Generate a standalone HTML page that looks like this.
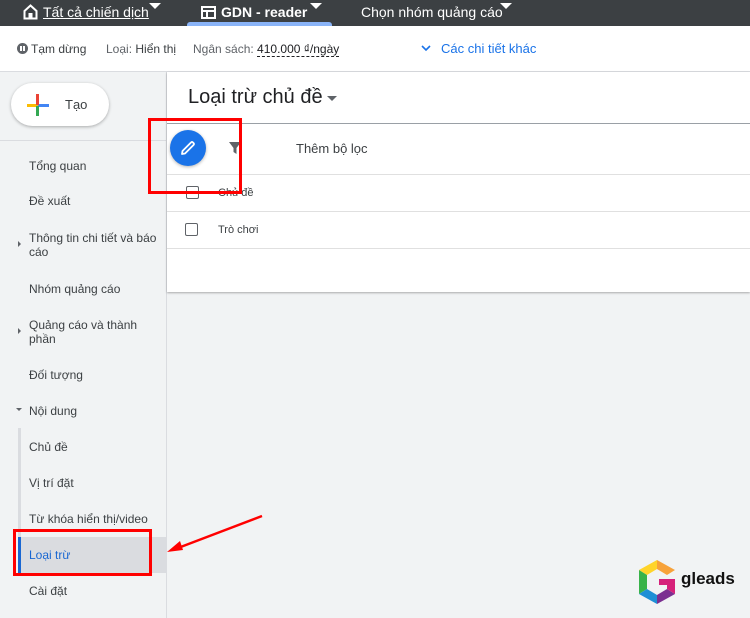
<!DOCTYPE html>
<html><head><meta charset="utf-8"><style>
*{margin:0;padding:0;box-sizing:border-box}
body{width:750px;height:618px;overflow:hidden;background:#f1f3f4;font-family:"Liberation Sans",Arial,sans-serif;position:relative;color:#3c4043}
.a{position:absolute;white-space:nowrap}
.top{left:0;top:0;width:750px;height:26px;background:#3c4043}
.tw{color:#fff;font-size:14px;top:4px}
.tri{width:0;height:0;border-left:6px solid transparent;border-right:6px solid transparent;border-top:6px solid #fff}
.sub{left:0;top:26px;width:750px;height:46px;background:#fff;border-bottom:1px solid #dadce0}
.s{font-size:12px;top:42px;color:#3c4043}
.nav{font-size:12px;color:#3c4043;left:29px;line-height:14px}
.card{left:167px;top:72px;width:583px;height:220px;background:#fff;box-shadow:0 1px 2px rgba(0,0,0,.3)}
.hl{left:167px;width:583px;height:1px;background:#e0e0e0}
.cb{width:13px;height:13px;border:1.5px solid #5f6368;border-radius:2px}
</style></head><body>
<div class="a top"></div>
<svg class="a" style="left:23px;top:4px" width="15" height="16" viewBox="0 0 15 16"><path d="M1.5 7 L7.5 1.5 L13.5 7 V14.5 H1.5 Z" fill="none" stroke="#fff" stroke-width="2"/><rect x="5.5" y="9" width="4" height="6" fill="#fff"/></svg>
<div class="a tw" style="left:43px;text-decoration:underline">Tất cả chiến dịch</div>
<div class="a tri" style="left:149px;top:3px"></div>
<div class="a" style="left:187px;top:22px;width:145px;height:4px;background:#8ab4f8;border-radius:3px 3px 0 0"></div>
<svg class="a" style="left:201px;top:6px" width="15" height="13"><rect x="1" y="1" width="13" height="11" fill="none" stroke="#fff" stroke-width="2"/><rect x="1" y="4" width="13" height="2" fill="#fff"/><rect x="5" y="6" width="2" height="6" fill="#fff"/></svg>
<div class="a tw" style="left:221px;font-weight:bold">GDN - reader</div>
<div class="a tri" style="left:310px;top:3px"></div>
<div class="a tw" style="left:361px">Chọn nhóm quảng cáo</div>
<div class="a tri" style="left:500px;top:3px"></div>
<div class="a sub"></div>
<div class="a" style="left:17px;top:43px;width:11px;height:11px;border-radius:50%;background:#5f6368"></div>
<div class="a" style="left:20px;top:46px;width:2px;height:5px;background:#fff"></div>
<div class="a" style="left:23px;top:46px;width:2px;height:5px;background:#fff"></div>
<div class="a s" style="left:31px">Tạm dừng</div>
<div class="a s" style="left:106px;color:#5f6368">Loại: <span style="color:#3c4043">Hiển thị</span></div>
<div class="a s" style="left:193px;color:#5f6368">Ngân sách: <span style="color:#202124;border-bottom:1px dashed #202124">410.000 ₫/ngày</span></div>
<svg class="a" style="left:421px;top:44px" width="10" height="8"><path d="M1 2 L5 6 L9 2" fill="none" stroke="#1a73e8" stroke-width="1.6"/></svg>
<div class="a" style="left:441px;top:41px;font-size:13px;color:#1a73e8">Các chi tiết khác</div>
<div class="a" style="left:166px;top:72px;width:1px;height:546px;background:#dadce0"></div>
<div class="a" style="left:0;top:140px;width:166px;height:1px;background:#dadce0"></div>
<div class="a" style="left:11px;top:83px;width:98px;height:43px;border-radius:22px;background:#fff;box-shadow:0 1px 3px rgba(0,0,0,.3)"></div>
<div class="a" style="left:27px;top:104px;width:11px;height:3px;background:#fbbc04"></div>
<div class="a" style="left:38px;top:104px;width:11px;height:3px;background:#4285f4"></div>
<div class="a" style="left:36px;top:94px;width:3px;height:11px;background:#ea4335"></div>
<div class="a" style="left:36px;top:106px;width:3px;height:10px;background:#34a853"></div>
<div class="a" style="left:65px;top:97px;font-size:13px;color:#3c4043">Tạo</div>
<div class="a nav" style="top:159px">Tổng quan</div>
<div class="a nav" style="top:194px">Đề xuất</div>
<div class="a" style="left:18px;top:241px;border-top:3px solid transparent;border-bottom:3px solid transparent;border-left:3px solid #5f6368"></div>
<div class="a nav" style="top:231px">Thông tin chi tiết và báo<br>cáo</div>
<div class="a nav" style="top:282px">Nhóm quảng cáo</div>
<div class="a" style="left:18px;top:328px;border-top:3px solid transparent;border-bottom:3px solid transparent;border-left:3px solid #5f6368"></div>
<div class="a nav" style="top:318px">Quảng cáo và thành<br>phần</div>
<div class="a nav" style="top:368px">Đối tượng</div>
<div class="a" style="left:16px;top:408px;border-left:3px solid transparent;border-right:3px solid transparent;border-top:3px solid #5f6368"></div>
<div class="a nav" style="top:404px">Nội dung</div>
<div class="a" style="left:18px;top:428px;width:3px;height:109px;background:#dadce0"></div>
<div class="a nav" style="top:440px">Chủ đề</div>
<div class="a nav" style="top:476px">Vị trí đặt</div>
<div class="a nav" style="top:512px">Từ khóa hiển thị/video</div>
<div class="a" style="left:18px;top:537px;width:148px;height:36px;background:#dadce0"></div>
<div class="a" style="left:18px;top:537px;width:3px;height:36px;background:#1967d2"></div>
<div class="a nav" style="top:548px;color:#1967d2">Loại trừ</div>
<div class="a nav" style="top:584px">Cài đặt</div>
<div class="a card"></div>
<div class="a" style="left:188px;top:86px;font-size:20px;color:#202124">Loại trừ chủ đề</div>
<div class="a" style="left:327px;top:96px;border-left:5px solid transparent;border-right:5px solid transparent;border-top:5px solid #5f6368"></div>
<div class="a hl" style="top:123px;background:#9aa0a6"></div>
<div class="a" style="left:170px;top:130px;width:36px;height:36px;border-radius:50%;background:#1a73e8;box-shadow:0 1px 3px rgba(0,0,0,.3)"></div>
<svg class="a" style="left:177px;top:137px" width="22" height="22" viewBox="0 0 22 22"><path d="M5 17 L5.5 14 L14 5.5 Q15 4.5 16 5.5 L16.5 6 Q17.5 7 16.5 8 L8 16.5 Z" fill="none" stroke="#fff" stroke-width="1.8" stroke-linejoin="round"/></svg>
<svg class="a" style="left:228px;top:141px" width="14" height="14"><path d="M1 1 H13 L8.5 7 V13 L5.5 11 V7 Z" fill="#5f6368"/></svg>
<div class="a" style="left:296px;top:141px;font-size:13px;color:#3c4043">Thêm bộ lọc</div>
<div class="a hl" style="top:174px"></div>
<div class="a cb" style="left:186px;top:186px"></div>
<div class="a" style="left:218px;top:187px;font-size:11px;color:#3c4043">Chủ đề</div>
<div class="a hl" style="top:211px"></div>
<div class="a cb" style="left:185px;top:223px"></div>
<div class="a" style="left:218px;top:224px;font-size:11px;color:#3c4043">Trò chơi</div>
<div class="a hl" style="top:248px"></div>
<div class="a" style="left:148px;top:118px;width:94px;height:76px;border:3px solid #f00"></div>
<div class="a" style="left:13px;top:529px;width:139px;height:47px;border:3px solid #f00"></div>
<svg class="a" style="left:160px;top:510px" width="110" height="48"><line x1="102" y1="6" x2="18" y2="38" stroke="#f00" stroke-width="2.5"/><path d="M7 42 L20 31 L23 40 Z" fill="#f00"/></svg>
<svg class="a" style="left:637px;top:559px" width="40" height="46" viewBox="0 0 40 46"><polygon points="20,1 38,11 30,16 20,10" fill="#f7a23a"/><polygon points="20,1 20,10 10,16 2,11" fill="#ffd42a"/><polygon points="2,11 10,16 10,30 2,35" fill="#38b34a"/><polygon points="2,35 10,30 20,36 20,45" fill="#1e8fd6"/><polygon points="20,36 30,30 38,35 20,45" fill="#7b2f91"/><polygon points="30,30 30,26 22,26 22,20 38,20 38,35" fill="#d6217a"/></svg>
<div class="a" style="left:681px;top:569px;font-size:17px;font-weight:bold;color:#111">gleads</div>
</body></html>
